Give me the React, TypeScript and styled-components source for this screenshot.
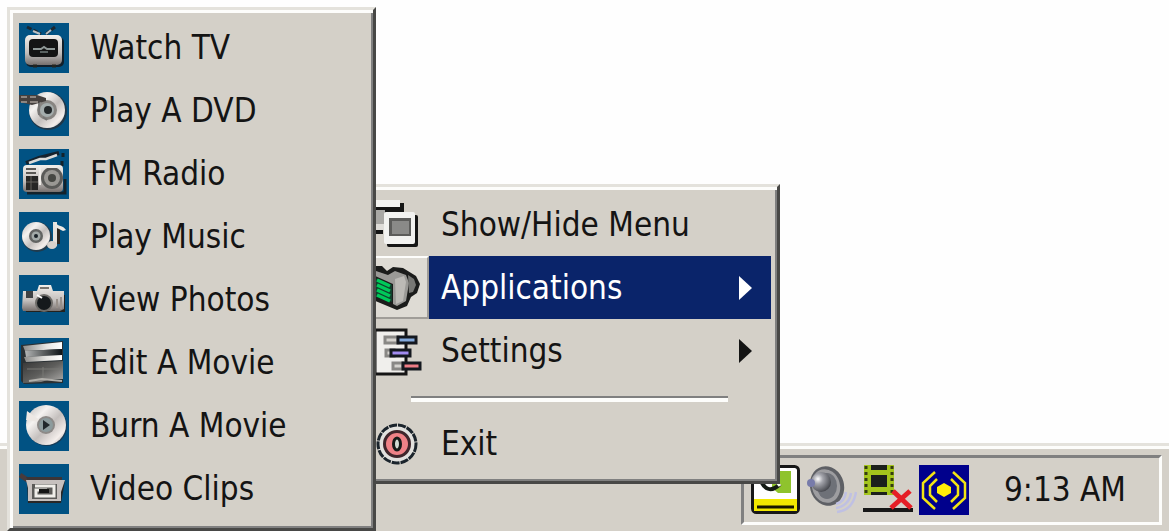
import React from "react";
import styled, { createGlobalStyle, css } from "styled-components";

const face = "#d4d0c8";
const shade = "#808080";
const dark = "#484846";
const light = "#fdfdfb";
const navy = "#0a246a";

const GlobalStyle = createGlobalStyle`
  * { box-sizing: border-box; }
  body {
    margin: 0;
    background: #fefefe;
    color: #141414;
    font: 33px/40px "DejaVu Sans Condensed", "DejaVu Sans", sans-serif;
  }
`;

const Screen = styled.main`
  position: relative;
  display: flex;
  flex-direction: column;
  justify-content: flex-end;
  min-height: 100vh;
  overflow: hidden;
`;

const MenuLayer = styled.nav`
  position: absolute;
  top: 7px;
  left: 7px;
  z-index: 1;
  display: flex;
  align-items: flex-start;
`;

const MenuPanel = styled.ul<{ $parent?: boolean }>`
  list-style: none;
  margin: 0;
  background: ${face};
  border: 3px solid;
  border-color: #e4e2dc ${dark} ${dark} #e4e2dc;
  box-shadow: inset 3px 3px 0 ${light}, inset -2px -2px 0 ${shade};
  ${(p) =>
    p.$parent
      ? css`
          width: 423px;
          margin: 177px 0 0 -19px;
          padding: 6px;
        `
      : css`
          position: relative;
          z-index: 1;
          width: 369px;
          padding: 6px 3px 8px;
        `}
`;

const Entry = styled.button`
  display: flex;
  align-items: center;
  width: 100%;
  height: 63px;
  padding: 0 6px;
  gap: 21px;
  border: 0;
  background: none;
  color: inherit;
  font: inherit;
  text-align: left;
  white-space: nowrap;
`;

const ParentEntry = styled(Entry)`
  padding: 0;
  gap: 0;
`;

const IconCell = styled.span<{ $active?: boolean }>`
  display: flex;
  align-items: center;
  justify-content: center;
  flex: none;
  width: 63px;
  height: 63px;
  ${(p) =>
    p.$active &&
    css`
      background: #dedbd4;
      border: 2px solid;
      border-color: ${light} #a09d98 #a09d98 ${light};
    `}
`;

const Label = styled.span<{ $active?: boolean }>`
  display: flex;
  align-items: center;
  justify-content: space-between;
  flex: 1;
  height: 63px;
  padding: 0 19px 0 12px;
  background: ${(p) => (p.$active ? navy : "transparent")};
  color: ${(p) => (p.$active ? "#ffffff" : "inherit")};
`;

const Separator = styled.li`
  height: 6px;
  margin: 14px 43px 10px 45px;
  border-top: 2px solid ${shade};
  border-bottom: 4px solid ${light};
`;

const Taskbar = styled.footer`
  display: flex;
  justify-content: flex-end;
  padding: 9px 7px 6px;
  background: ${face};
  border-top: 3px solid #e4e2dc;
  box-shadow: inset 0 3px 0 ${light};
`;

const Tray = styled.section`
  display: flex;
  align-items: center;
  height: 70px;
  padding: 0 33px 0 7px;
  gap: 6px;
  border: 3px solid;
  border-color: ${shade} ${light} ${light} ${shade};
`;

const Clock = styled.time`
  margin-left: 29px;
  white-space: nowrap;
`;

const Glyph = styled.svg`
  display: block;
  flex: none;
  width: 50px;
  height: 50px;
`;

const ArrowGlyph = styled.svg`
  display: block;
  width: 14px;
  height: 24px;
  fill: currentColor;
`;

const Defs = styled.svg`
  position: absolute;
`;

const Pic = ({ children }: { children: React.ReactNode }) => (
  <Glyph viewBox="0 0 50 50" aria-hidden="true">
    {children}
  </Glyph>
);

const Tile = ({ children }: { children: React.ReactNode }) => (
  <Pic>
    <rect width="50" height="50" fill="#015283" />
    {children}
  </Pic>
);

const Arrow = () => (
  <ArrowGlyph viewBox="0 0 14 24" aria-hidden="true">
    <path d="M1 0 14 12 1 24Z" />
  </ArrowGlyph>
);

const Gradients = () => (
  <Defs width="0" height="0" aria-hidden="true">
    <defs>
      <linearGradient id="metal" x1="0" y1="0" x2="0" y2="1">
        <stop offset="0" stopColor="#f2efeb" />
        <stop offset="0.6" stopColor="#c2bebc" />
        <stop offset="1" stopColor="#77706e" />
      </linearGradient>
      <linearGradient id="disc" x1="0" y1="0" x2="1" y2="1">
        <stop offset="0" stopColor="#b8b6b6" />
        <stop offset="0.3" stopColor="#f5f2f0" />
        <stop offset="0.55" stopColor="#c4bfbd" />
        <stop offset="0.8" stopColor="#f4eeeb" />
        <stop offset="1" stopColor="#98908e" />
      </linearGradient>
      <linearGradient id="bar" x1="0" y1="0" x2="1" y2="0">
        <stop offset="0" stopColor="#8b8b89" />
        <stop offset="0.6" stopColor="#e6e5e2" />
        <stop offset="1" stopColor="#ffffff" />
      </linearGradient>
      <linearGradient id="slot" x1="0" y1="0" x2="1" y2="0">
        <stop offset="0" stopColor="#b4b6b6" />
        <stop offset="0.5" stopColor="#5c5f60" />
        <stop offset="1" stopColor="#0c1216" />
      </linearGradient>
      <linearGradient id="slate" x1="0" y1="0" x2="1" y2="1">
        <stop offset="0" stopColor="#363636" />
        <stop offset="0.5" stopColor="#5e5e5c" />
        <stop offset="1" stopColor="#b0aeac" />
      </linearGradient>
      <radialGradient id="cone" cx="0.35" cy="0.35" r="0.7">
        <stop offset="0" stopColor="#ffffff" />
        <stop offset="0.35" stopColor="#a4a5ac" />
        <stop offset="1" stopColor="#44464c" />
      </radialGradient>
    </defs>
  </Defs>
);

const TvIcon = () => (
  <Tile>
    <path d="M8 4 22 11 M36 4 27 11" stroke="#1c2730" strokeWidth="3" fill="none" strokeDasharray="5 2" />
    <path d="M14 8 21 11 M32 7 27 11" stroke="#b9c0c4" strokeWidth="2" />
    <rect x="7" y="14" width="38" height="30" rx="5" fill="#12202b" />
    <rect x="6" y="12" width="37" height="30" rx="5" fill="url(#metal)" />
    <rect x="10" y="16" width="29" height="18" rx="4" fill="#141414" />
    <path d="M14 26h8l3-2 3 2h8" stroke="#8f9896" strokeWidth="2" fill="none" />
    <path d="M21 29h8" stroke="#596160" strokeWidth="2" />
    <path d="M14 43h4M33 43h4" stroke="#24241f" strokeWidth="3" />
  </Tile>
);

const DvdIcon = () => (
  <Tile>
    <circle cx="29" cy="25" r="19" fill="#203749" />
    <circle cx="28" cy="24" r="18" fill="url(#disc)" />
    <circle cx="28" cy="24" r="10" fill="#888582" />
    <circle cx="28" cy="24" r="7" fill="#a5adad" />
    <circle cx="29" cy="24" r="4" fill="#24282a" />
    <path d="M0 9h18l9 3v3L13 19 0 16Z" fill="#45403e" />
    <path d="M2 11h6M11 11h6M2 16h6M11 16h8" stroke="#8d8580" strokeWidth="2" />
    <path d="M20 17v12M24 31l4 3" stroke="#777675" strokeWidth="2" />
  </Tile>
);

const RadioIcon = () => (
  <Tile>
    <path d="M7 14 20 9 40 4" stroke="#15222d" strokeWidth="4" fill="none" />
    <path d="M10 14 21 10h6l11-4" stroke="#dadbd9" strokeWidth="2.5" fill="none" />
    <path d="M44 4v4M43 12v5M46 30v14H8" stroke="#14222b" strokeWidth="3" fill="none" />
    <rect x="4" y="16" width="40" height="27" rx="4" fill="url(#metal)" />
    <path d="M7 20h10M7 24h10" stroke="#5b5956" strokeWidth="2" />
    <rect x="7" y="27" width="12" height="14" fill="#272625" />
    <path d="M7 33h12M12 27v14" stroke="#66625f" />
    <circle cx="33" cy="29" r="11" fill="#5a5a58" />
    <circle cx="33" cy="29" r="8" fill="#9a9894" />
    <circle cx="33" cy="29" r="4" fill="#464743" />
    <path d="M21 18v18M28 18h10" stroke="#efece8" strokeWidth="2" />
  </Tile>
);

const MusicIcon = () => (
  <Tile>
    <circle cx="18" cy="25" r="15" fill="#213b4d" />
    <circle cx="17" cy="24" r="14" fill="url(#disc)" />
    <circle cx="17" cy="24" r="7" fill="#626362" />
    <circle cx="17" cy="24" r="4.5" fill="#a3aaa8" />
    <circle cx="17" cy="24" r="2" fill="#1a2227" />
    <path d="M39 14v18" stroke="#2b241e" strokeWidth="4" />
    <path d="M36 10v24" stroke="#e8e2dd" strokeWidth="4" />
    <path d="M36 10c3 5 8 3 11 8l-3 1-8-4Z" fill="#eee9e3" />
    <ellipse cx="33" cy="33" rx="5" ry="4" fill="#d8d1cc" />
  </Tile>
);

const PhotoIcon = () => (
  <Tile>
    <path d="M5 20h41v17H7Z" fill="#24211d" />
    <path d="M4 16h14l2-6h12l2 6h11v18l-4 2H4l-1-3Z" fill="url(#metal)" />
    <path d="M21 13h9" stroke="#77736e" strokeWidth="2" />
    <rect x="7" y="16" width="7" height="7" fill="#3d4144" />
    <circle cx="25" cy="28" r="9" fill="#6d6b68" />
    <circle cx="25" cy="28" r="7" fill="#15191c" />
    <path d="m18 20 5 3" stroke="#fff" strokeWidth="2" />
    <path d="M38 24v9M42 22v12" stroke="#98908a" strokeWidth="2" />
  </Tile>
);

const ClapperIcon = () => (
  <Tile>
    <path d="M2 7 44 3v42L5 46 2 43Z" fill="#2a3033" />
    <path d="M4 8 43 4v7L6 13Z" fill="url(#bar)" />
    <path d="M6 13 43 11v6L7 19Z" fill="url(#slot)" />
    <path d="M5 19 43 17v5L7 24Z" fill="url(#bar)" />
    <path d="M4 25 44 23v18H32L22 44 4 45Z" fill="url(#slate)" />
    <path d="M8 31h32M24 29v12" stroke="#787874" />
    <path d="M10 43 23 41 43 43" stroke="#b2b0ab" strokeWidth="2" fill="none" />
  </Tile>
);

const BurnIcon = () => (
  <Tile>
    <circle cx="28" cy="25" r="20" fill="#173c58" />
    <circle cx="27" cy="24" r="20" fill="url(#disc)" />
    <path d="m8 10 17 12-18-3Z" fill="#ede8e4" />
    <circle cx="27" cy="24" r="9" fill="#8d8a88" />
    <circle cx="27" cy="24" r="7" fill="#8c9b9d" />
    <path d="m24 19 7 5-7 5Z" fill="#20272b" />
  </Tile>
);

const ClipsIcon = () => (
  <Tile>
    <path d="M1 11 10 17" stroke="#483b3d" strokeWidth="5" />
    <path d="M7 13h36v4H9Z" fill="#3b3537" />
    <path d="M8 17h38l-4 22H9Z" fill="#292727" />
    <path d="M7 16h39l-4 12v9H9V24Z" fill="#c6c0be" />
    <rect x="13" y="20" width="25" height="15" fill="#5b5a58" />
    <path d="M16 22h19v10H17v-6h11" stroke="#f0eeea" strokeWidth="3" fill="none" />
    <path d="M20 25h10v4H20Z" fill="#151515" />
  </Tile>
);

const WindowsIcon = () => (
  <Pic>
    <path d="M0 3h31v10H0Z" fill="#151515" />
    <path d="M0 0h27v7H0Z" fill="#f4f4f2" />
    <path d="M0 10h12v20H0Z" fill="#a9a8a5" />
    <path d="M0 24h12v6H0Z" fill="#dedcd8" />
    <path d="M0 32h10" stroke="#151515" strokeWidth="4" />
    <rect x="14" y="15" width="31" height="32" rx="2" fill="#151515" />
    <rect x="11" y="12" width="31" height="32" rx="2" fill="#f2f2f0" />
    <path d="M16 18h22v18H16Z" fill="#5c5c5a" />
    <path d="M19 21h17v13H19Z" fill="#8a8a88" />
  </Pic>
);

const MonitorIcon = () => (
  <Pic>
    <path d="M0 3h9l5 5 6-4 10 1 13 8 4 8-3 9-6 4-4 9-10 4L0 37Z" fill="#1b1c1b" />
    <path d="M0 7 15 12 22 8 33 12 36 20 33 38 24 43 20 41 20 21 0 12Z" fill="#9a9996" />
    <path d="M22 16 31 13 33 19 30 38 23 41Z" fill="#bcbab6" />
    <path d="M35 12 41 16 43 22 40 29 36 30Z" fill="#777774" />
    <path d="M0 14 19 22v17L0 33Z" fill="#113f2d" />
    <path d="M4 17 17 23M4 22 17 28M4 27 17 33M4 32 17 38" stroke="#00c95a" strokeWidth="3.5" />
  </Pic>
);

const SettingsIcon = () => (
  <Pic>
    <path d="M2 4h31v44H2Z" fill="#f0efec" stroke="#151515" strokeWidth="3" />
    <g strokeWidth="3">
      <path d="M12 11h13v6H12ZM13 24h8v6h-8ZM20 37h10v6H20Z" fill="#d5d3ce" stroke="#898885" />
      <path d="M25 11h18v6H25Z" fill="#83a9dc" stroke="#14181f" />
      <path d="M18 24h19v6H18Z" fill="#a18bf0" stroke="#14181f" />
      <path d="M30 37h17v6H30Z" fill="#ee7d86" stroke="#14181f" />
    </g>
  </Pic>
);

const PowerIcon = () => (
  <Pic>
    <circle cx="24" cy="25" r="19" fill="#e2e1de" stroke="#1b242c" strokeWidth="3" strokeDasharray="8 1" />
    <circle cx="24" cy="25" r="12.5" fill="#f08287" stroke="#40262b" strokeWidth="3" />
    <ellipse cx="24" cy="25" rx="3.5" ry="6" fill="#d3dbd4" stroke="#171b19" strokeWidth="3" />
  </Pic>
);

const CardIcon = () => (
  <Pic>
    <rect x="1.5" y="1.5" width="46" height="46" rx="4" fill="#fff" stroke="#171717" strokeWidth="3" />
    <path d="M3 34h43v12H3Z" fill="#f2e800" />
    <path d="M6 42h37" stroke="#171700" strokeWidth="3" />
    <path d="M21 6h19v22H27L21 23Z" fill="#8fc32d" />
    <path d="M11 18c4 7 10 9 18 1" stroke="#141b14" strokeWidth="4" fill="none" />
    <path d="M20 14c4 1 7 4 9 7" stroke="#f9fff0" strokeWidth="3" fill="none" />
  </Pic>
);

const SpeakerIcon = () => (
  <Pic>
    <ellipse cx="20" cy="21" rx="17" ry="20" transform="rotate(-15 20 21)" fill="#5e6065" />
    <ellipse cx="19" cy="21" rx="14" ry="17" transform="rotate(-15 19 21)" fill="#9d9da0" />
    <ellipse cx="20" cy="21" rx="10" ry="13" fill="#6e7178" />
    <circle cx="14" cy="17" r="10" fill="url(#cone)" />
    <circle cx="4" cy="18" r="4" fill="#777baa" />
    <path d="M29 39c5-1 9-5 10-12M29 43c8-1 14-7 15-15M30 47c10-1 17-8 19-20" stroke="#bfc0e3" strokeWidth="2.5" fill="none" />
  </Pic>
);

const FilmIcon = () => (
  <Pic>
    <path d="M1 0h30v30H1Z" fill="#a4c51c" />
    <path d="M8 0h16v5H8ZM8 10h16v12H8ZM8 27h16v3H8Z" fill="#1c201c" />
    <path d="M3 1v29M29 1v29" stroke="#353d12" strokeWidth="3" strokeDasharray="3 3" />
    <path d="M0 45h50" stroke="#171717" strokeWidth="4" />
    <path d="m30 26 18 17M47 26 28 43" stroke="#e51e26" strokeWidth="5" />
  </Pic>
);

const SignalIcon = () => (
  <Pic>
    <rect width="50" height="50" fill="#00008c" />
    <path d="m25 18 7 4v6l-7 4-7-4v-6Z" fill="#ffee08" />
    <path d="M16 7 4 18v15l12 11M18 14l-7 7v9l7 7M34 7l12 11v15L34 44M32 14l7 7v9l-7 7" stroke="#f2e413" strokeWidth="2.5" fill="none" />
  </Pic>
);

const applications = [
  { name: "Watch TV", Icon: TvIcon },
  { name: "Play A DVD", Icon: DvdIcon },
  { name: "FM Radio", Icon: RadioIcon },
  { name: "Play Music", Icon: MusicIcon },
  { name: "View Photos", Icon: PhotoIcon },
  { name: "Edit A Movie", Icon: ClapperIcon },
  { name: "Burn A Movie", Icon: BurnIcon },
  { name: "Video Clips", Icon: ClipsIcon },
];

type ItemProps = {
  name: string;
  Icon: React.ComponentType;
  active?: boolean;
  submenu?: boolean;
};

const ParentItem = ({ name, Icon, active, submenu }: ItemProps) => (
  <li>
    <ParentEntry type="button" aria-haspopup={submenu ? "menu" : undefined} aria-expanded={active}>
      <IconCell $active={active}>
        <Icon />
      </IconCell>
      <Label $active={active}>
        {name}
        {submenu && <Arrow />}
      </Label>
    </ParentEntry>
  </li>
);

export default function App() {
  return (
    <Screen>
      <GlobalStyle />
      <Gradients />
      <MenuLayer aria-label="Tray menu">
        <MenuPanel aria-label="Applications">
          {applications.map(({ name, Icon }) => (
            <li key={name}>
              <Entry type="button">
                <Icon />
                {name}
              </Entry>
            </li>
          ))}
        </MenuPanel>
        <MenuPanel $parent>
          <ParentItem name="Show/Hide Menu" Icon={WindowsIcon} />
          <ParentItem name="Applications" Icon={MonitorIcon} active submenu />
          <ParentItem name="Settings" Icon={SettingsIcon} submenu />
          <Separator role="separator" />
          <ParentItem name="Exit" Icon={PowerIcon} />
        </MenuPanel>
      </MenuLayer>
      <Taskbar>
        <Tray aria-label="Notification area">
          <CardIcon />
          <SpeakerIcon />
          <FilmIcon />
          <SignalIcon />
          <Clock dateTime="09:13">9:13 AM</Clock>
        </Tray>
      </Taskbar>
    </Screen>
  );
}
